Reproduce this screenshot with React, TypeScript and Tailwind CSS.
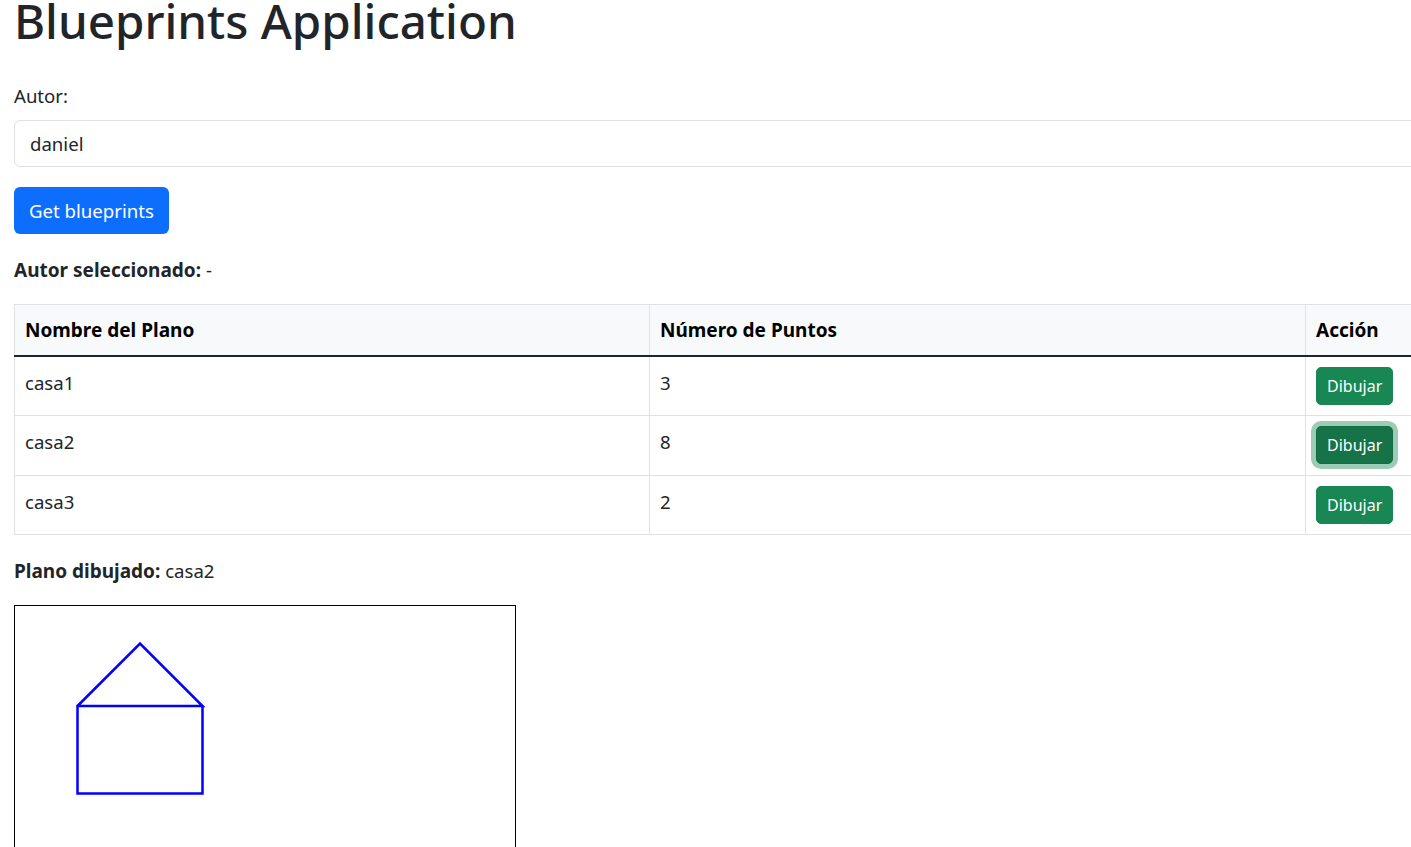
import React from "react";

const rows = [
  { name: "casa1", pts: 3, focus: false, h: "h-[59px]" },
  { name: "casa2", pts: 8, focus: true, h: "h-[60px]" },
  { name: "casa3", pts: 2, focus: false, h: "h-[59px]" },
];

export default function App() {
  return (
    <div
      className="w-[1411px] h-[847px] overflow-hidden bg-white text-[#212529]"
      style={{ fontFamily: '"Noto Sans", "Open Sans", sans-serif' }}
    >
      <div className="w-[1470px] pl-[14px]">
        <h1 className="text-[47.5px] leading-[60px] font-medium mt-[-9px] text-[#212529]">
          Blueprints Application
        </h1>
        <label className="block mt-[30px] text-[18.6px] leading-[30px]">Autor:</label>
        <div className="mt-[9px] h-[47px] w-[1440px] border border-[#dee2e6] rounded-[6px] flex items-center px-[15px] text-[18.6px]">
          daniel
        </div>
        <button className="mt-[20px] h-[47px] px-[15px] bg-[#0d6efd] text-white text-[18.6px] leading-[30px] rounded-[6px] block">
          Get blueprints
        </button>
        <p className="mt-[21px] text-[18.6px] leading-[30px]">
          <span className="font-bold text-[19px]">Autor seleccionado:</span> -
        </p>
        <table className="mt-[19px] w-[1440px] border-collapse text-[18.6px] leading-[30px] table-fixed">
          <colgroup>
            <col className="w-[635px]" />
            <col className="w-[656px]" />
            <col />
          </colgroup>
          <thead>
            <tr className="bg-[#f8f9fa]">
              <th className="text-left font-bold text-[19px] text-black border border-[#dee2e6] border-b-2 border-b-[#212529] px-[10px] py-[10px]">
                Nombre del Plano
              </th>
              <th className="text-left font-bold text-[19px] text-black border border-[#dee2e6] border-b-2 border-b-[#212529] px-[10px] py-[10px]">
                Número de Puntos
              </th>
              <th className="text-left font-bold text-[19px] text-black border border-[#dee2e6] border-b-2 border-b-[#212529] px-[10px] py-[10px]">
                Acción
              </th>
            </tr>
          </thead>
          <tbody>
            {rows.map((r) => (
              <tr key={r.name} className={r.h}>
                <td className="align-top border border-[#dee2e6] px-[10px] pt-[11px] pb-0">{r.name}</td>
                <td className="align-top border border-[#dee2e6] px-[10px] pt-[11px] pb-0">{r.pts}</td>
                <td className="align-top border border-[#dee2e6] px-[10px] pt-[10px] pb-[9px]">
                  <button
                    className={
                      r.focus
                        ? "h-[38px] px-[10px] text-[16px] leading-[26px] text-white rounded-[5px] bg-[#157347] border border-[#146c43] shadow-[0_0_0_5px_rgba(60,153,110,0.5)] block"
                        : "h-[38px] px-[10px] text-[16px] leading-[26px] text-white rounded-[5px] bg-[#198754] border border-[#198754] block"
                    }
                  >
                    Dibujar
                  </button>
                </td>
              </tr>
            ))}
          </tbody>
        </table>
        <p className="mt-[21px] text-[18.6px] leading-[30px]">
          <span className="font-bold text-[19px]">Plano dibujado:</span> casa2
        </p>
        <div className="mt-[19px] w-[502px] h-[502px] border border-black">
          <svg width="500" height="500" viewBox="0 0 500 500">
            <polyline
              points="62.5,100 125,37.5 187.5,100 62.5,100 62.5,187.5 187.5,187.5 187.5,100"
              fill="none"
              stroke="#0000ff"
              strokeWidth="2.5"
            />
          </svg>
        </div>
      </div>
    </div>
  );
}
